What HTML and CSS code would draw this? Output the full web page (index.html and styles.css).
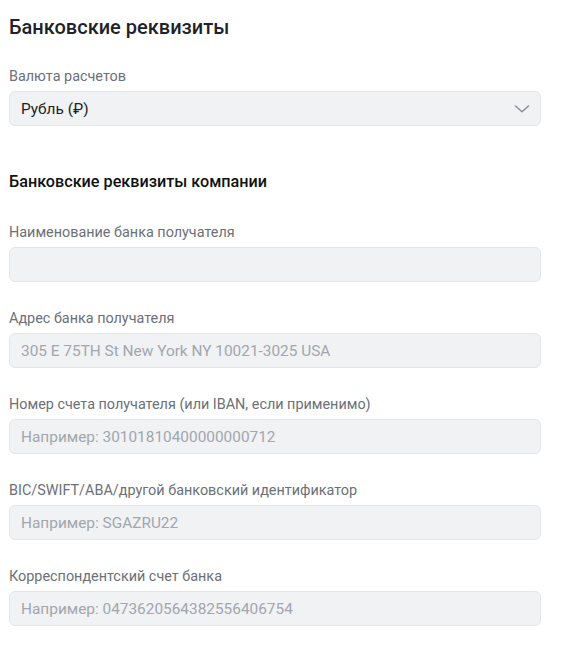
FILE: index.html
```html
<!DOCTYPE html>
<html lang="ru">
<head>
  <meta charset="UTF-8" />
  <meta name="viewport" content="width=device-width, initial-scale=1.0">
  <title>Банковские реквизиты</title>
  <link rel="stylesheet" href="styles.css">
</head>
<body>
<div class="container">
  <h1>Банковские реквизиты</h1>

  <div class="field">
    <label>Валюта расчетов</label>
    <div class="select">
      <span>Рубль (₽)</span>
      <svg width="16" height="8" viewBox="0 0 16 8" fill="none" stroke="#8a8f98" stroke-width="1.5" stroke-linecap="round" stroke-linejoin="round">
        <path d="M1.5 1 L8 6.8 L14.5 1"/>
      </svg>
    </div>
  </div>

  <h2>Банковские реквизиты компании</h2>

  <div class="field">
    <label>Наименование банка получателя</label>
    <input type="text">
  </div>

  <div class="field">
    <label>Адрес банка получателя</label>
    <input type="text" placeholder="305 E 75TH St New York NY 10021-3025 USA">
  </div>

  <div class="field">
    <label>Номер счета получателя (или IBAN, если применимо)</label>
    <input type="text" placeholder="Например: 30101810400000000712">
  </div>

  <div class="field">
    <label>BIC/SWIFT/ABA/другой банковский идентификатор</label>
    <input type="text" placeholder="Например: SGAZRU22">
  </div>

  <div class="field">
    <label>Корреспондентский счет банка</label>
    <input type="text" placeholder="Например: 0473620564382556406754">
  </div>
</div>
</body>
</html>
```

FILE: styles.css
```css
body {
  font-family: Roboto, "Noto Sans", sans-serif;
  background: #fff;
  color: #1f2329;
  margin: 0;
  padding: 0 9px;
}

.container {
  width: 532px;
}

h1 {
  font-size: 20px;
  font-weight: 500;
  line-height: 28px;
  margin: 13px 0 0;
  color: #1f2329;
}

h2 {
  font-size: 16.2px;
  font-weight: 500;
  line-height: 24px;
  margin: 44px 0 0;
  color: #111;
}

.field {
  margin-top: 26px;
}

h1 + .field {
  margin-top: 25px;
}

h2 + .field {
  margin-top: 28px;
}

.field label {
  display: block;
  font-size: 14.4px;
  line-height: 22px;
  color: #6b7079;
  margin-bottom: 3px;
}

.select,
.field input {
  box-sizing: border-box;
  width: 100%;
  height: 35px;
  background: #f1f2f4;
  border: 1px solid #e3e5e8;
  border-radius: 6px;
  font-family: inherit;
  font-size: 15.4px;
}

.select {
  display: flex;
  align-items: center;
  justify-content: space-between;
  padding: 0 10px 0 11px;
  color: #1f2329;
}

.field input {
  padding: 0 11px;
  color: #1f2329;
}

.field input::placeholder {
  color: #a2a6ad;
}
```
